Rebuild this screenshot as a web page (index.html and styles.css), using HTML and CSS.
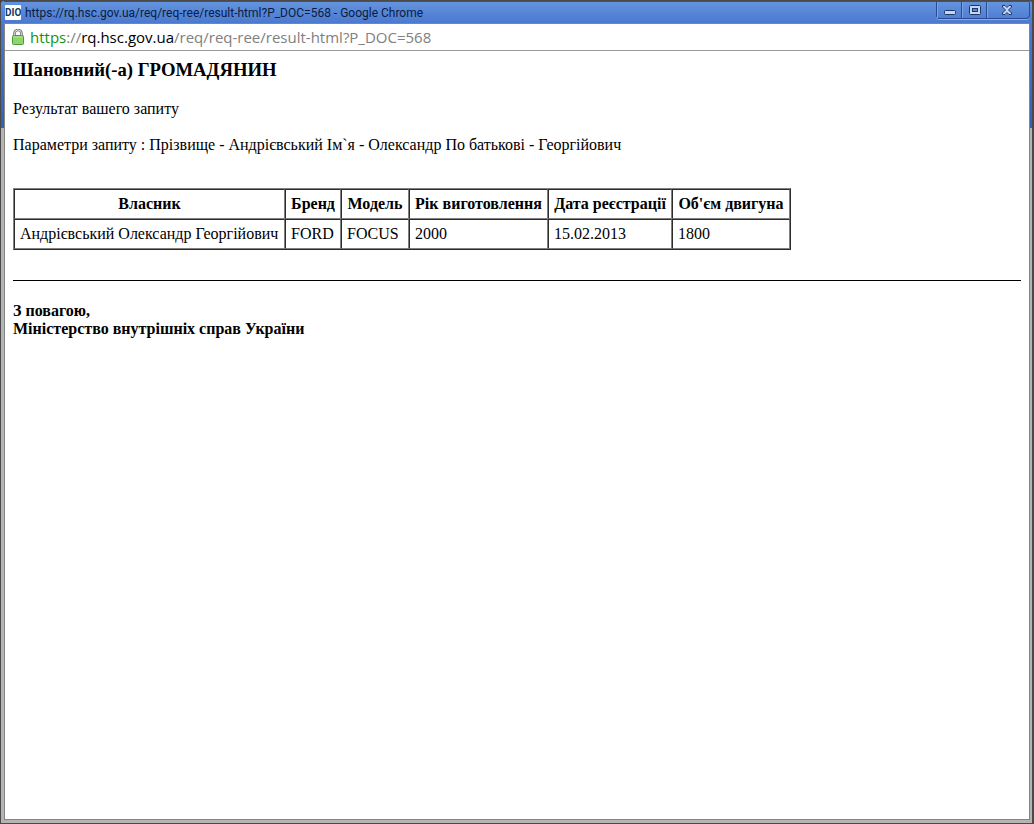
FILE: index.html
```html
<!DOCTYPE html>
<html lang="uk">
<head>
<meta charset="utf-8">
<title>https://rq.hsc.gov.ua/req/req-ree/result-html?P_DOC=568</title>
<link rel="stylesheet" href="styles.css">
</head>
<body>
<div class="window">
  <header class="titlebar">
    <span class="favicon">DIO</span>
    <span class="title">https://rq.hsc.gov.ua/req/req-ree/result-html?P_DOC=568 - Google Chrome</span>
    <div class="controls">
      <button class="control" type="button" aria-label="Згорнути">
        <svg width="14" height="12" viewBox="0 0 14 12"><rect x="1.5" y="6.5" width="11" height="4" rx="1" fill="#c5d6f5" stroke="#1d3868"/></svg>
      </button>
      <button class="control" type="button" aria-label="Розгорнути">
        <svg width="14" height="12" viewBox="0 0 14 12"><rect x="1.5" y="1.5" width="11" height="9" rx="1" fill="#c5d6f5" stroke="#1d3868"/><rect x="4.5" y="4.5" width="5" height="3" fill="#5a87d8" stroke="#1d3868"/></svg>
      </button>
      <button class="control control-close" type="button" aria-label="Закрити">
        <svg width="14" height="12" viewBox="0 0 14 12"><path d="M2.500 1.500h2.500l2 2 2-2h2.500v1.500l-3 3 3 3v1.500H9l-2-2-2 2H2.500V9l3-3-3-3z" fill="#c5d6f5" stroke="#1d3868"/></svg>
      </button>
    </div>
  </header>
  <div class="viewport">
    <div class="address">
      <svg class="lock" viewBox="0 0 12 16" aria-hidden="true">
        <path d="M2.500 8V4.500a3.500 3.500 0 0 1 7 0V8" fill="none" stroke="#777" stroke-width="2.600"/>
        <path d="M2.500 8V4.500a3.500 3.500 0 0 1 7 0V8" fill="none" stroke="#ddd"/>
        <rect x=".5" y="6.500" width="11" height="9" rx="1" fill="#8fd46c" stroke="#4d9a38"/>
        <path d="M1.500 8h9" stroke="#b5e59c"/>
      </svg>
      <span class="url"><span class="scheme">https</span>://<span class="host">rq.hsc.gov.ua</span>/req/req-ree/result-html?P_DOC=568</span>
    </div>
    <main class="page">
      <h3 class="greeting">Шановний(-а) ГРОМАДЯНИН</h3>
      <p class="text">Результат вашего запиту</p>
      <p class="text">Параметри запиту : Прізвище - Андрієвський Ім`я - Олександр По батькові - Георгійович</p>
      <table class="results">
        <colgroup>
          <col class="col-owner"><col class="col-brand"><col class="col-model"><col class="col-year"><col class="col-date"><col class="col-engine">
        </colgroup>
        <thead>
          <tr><th>Власник</th><th>Бренд</th><th>Модель</th><th>Рік виготовлення</th><th>Дата реєстрації</th><th>Об'єм двигуна</th></tr>
        </thead>
        <tbody>
          <tr><td>Андрієвський Олександр Георгійович</td><td>FORD</td><td>FOCUS</td><td>2000</td><td>15.02.2013</td><td>1800</td></tr>
        </tbody>
      </table>
      <hr class="rule">
      <p class="signature">З повагою,<br>Міністерство внутрішніх справ України</p>
    </main>
  </div>
</div>
</body>
</html>
```
FILE: styles.css
```css
* { box-sizing: border-box; }

body {
  margin: 0;
  background: #444;
}

.window {
  display: flex;
  flex-direction: column;
  min-height: 100vh;
  padding: 0 2px 3px 3px;
  border: 1px solid #4a4a4a;
  border-right-width: 2px;
  border-radius: 4px 4px 0 0;
  background: linear-gradient(#6594df 0, #4a79cf 22px, #3360b4 127px, #b4b4b4 127px);
}

.titlebar {
  display: flex;
  align-items: center;
  height: 22px;
  padding-left: 1px;
  border-top: 1px solid #2f5499;
}

.favicon {
  width: 16px;
  height: 15px;
  margin-right: 4px;
  overflow: hidden;
  border-radius: 1px;
  background: #fff;
  font: bold 10px/15px Roboto, "Liberation Sans", sans-serif;
  color: #12386b;
  text-align: center;
}

.title {
  flex: 1;
  overflow: hidden;
  font: 12px/20px Roboto, "Open Sans", sans-serif;
  color: #0a1c40;
  white-space: nowrap;
}

.controls {
  display: flex;
  align-self: flex-start;
  padding-right: 3px;
  border: 1px solid #2b4c8c;
  border-top: 0;
  border-radius: 0 0 4px 4px;
  box-shadow: 0 1px #86abe8;
}

.control {
  display: flex;
  align-items: center;
  justify-content: center;
  width: 25px;
  height: 16px;
  padding: 0 1px 0 0;
  border: 0;
  border-left: 1px solid #7ba3e6;
  background: transparent;
}

.control + .control { box-shadow: -1px 0 #2b4c8c; }

.control-close { width: 39px; }

.viewport {
  display: flex;
  flex: 1;
  flex-direction: column;
  border: 1px solid #858585;
  background: #fff;
}

.address {
  display: flex;
  align-items: center;
  height: 27px;
  padding-left: 7px;
  border-bottom: 1px solid #999;
}

.lock {
  width: 12px;
  height: 16px;
  margin-right: 6px;
}

.url {
  font: 15px/24px "Open Sans", "Noto Sans", sans-serif;
  color: #808080;
}

.scheme { color: #129412; }

.host { color: #000; }

.page {
  padding: 8px;
  font: 16px/18px "Liberation Serif", "Times New Roman", serif;
  color: #000;
}

.greeting {
  margin: 0 0 19px;
  line-height: 22px;
}

.text { margin: 0 0 18px; }

.results {
  margin-top: 34px;
  border: 1px solid;
  border-color: #808080 #2c2c2c #2c2c2c #808080;
  border-spacing: 0;
}

.col-owner { width: 271px; }
.col-brand { width: 56px; }
.col-model { width: 68px; }
.col-year { width: 139px; }
.col-date { width: 124px; }
.col-engine { width: 118px; }

.results th,
.results td {
  padding: 5px;
  border: 1px solid;
  border-color: #2c2c2c #808080 #808080 #2c2c2c;
  text-align: left;
}

.results th { text-align: center; }

.rule {
  height: 1px;
  margin: 30px 0 21px;
  border: 0;
  background: #000;
}

.signature {
  margin: 0;
  font-weight: bold;
}
```
